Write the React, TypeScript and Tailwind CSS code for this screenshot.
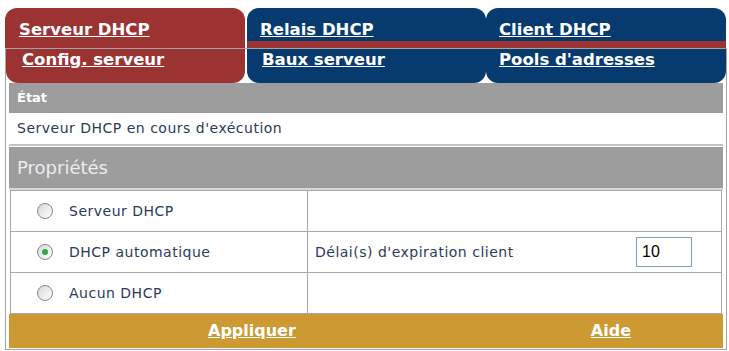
import React from "react";

const font = { fontFamily: '"DejaVu Sans", Verdana, sans-serif' };

function Radio({ checked }: { checked?: boolean }) {
  return (
    <span className="flex h-[16px] w-[16px] items-center justify-center rounded-full border border-[#7b8898] bg-gradient-to-br from-[#d8d8d8] to-white">
      {checked && <span className="h-[6px] w-[6px] rounded-full bg-[#2fa84a]" />}
    </span>
  );
}

function OptionRow({ label, checked, right }: { label: string; checked?: boolean; right?: React.ReactNode }) {
  return (
    <div className="flex h-[41px] border-b border-[#a8a8a8] last:h-[40px] last:border-b-0">
      <div className="flex w-[297px] items-center gap-[16px] border-r border-[#a8a8a8] pl-[26px] text-[14px] tracking-[0.5px] text-[#2b3a5c]">
        <Radio checked={checked} />
        <span>{label}</span>
      </div>
      <div className="flex flex-1 items-center">{right}</div>
    </div>
  );
}

export default function App() {
  return (
    <div className="h-[351px] w-[729px] overflow-hidden bg-white pl-[5px] pt-[8px]" style={font}>
      {/* top tabs */}
      <div className="flex h-[40px] text-[16.5px] font-bold leading-none text-white">
        <div className="w-[240px] rounded-t-[12px] bg-[#9b3333] pl-[14px] pt-[14px]">
          <a className="underline">Serveur DHCP</a>
        </div>
        <div className="ml-[2px] w-[239px] rounded-t-[12px] border-b-[7px] border-[#9b3333] bg-[#073a6e] pl-[13px] pt-[14px]">
          <a className="underline">Relais DHCP</a>
        </div>
        <div className="w-[240px] rounded-t-[12px] border-b-[7px] border-[#9b3333] bg-[#073a6e] pl-[13px] pt-[14px]">
          <a className="underline">Client DHCP</a>
        </div>
      </div>

      <div className="w-[722px] border border-[#a3a3a3]">
        {/* sub tabs */}
        <div className="flex h-[34px] text-[16.5px] font-bold leading-none text-white">
          <div className="w-[239px] rounded-b-[12px] bg-[#9b3333] pl-[16px] pt-[3px]">
            <a className="underline">Config. serveur</a>
          </div>
          <div className="ml-[2px] w-[239px] rounded-b-[12px] bg-[#073a6e] pl-[15px] pt-[3px]">
            <a className="underline">Baux serveur</a>
          </div>
          <div className="w-[240px] rounded-b-[12px] bg-[#073a6e] pl-[13px] pt-[3px]">
            <a className="underline">Pools d'adresses</a>
          </div>
        </div>

        <div className="px-[3px] pb-[1px]">
          <div className="flex h-[30px] items-center bg-[#9d9d9d] pl-[8px] text-[13px] font-bold text-white">État</div>
          <div className="flex h-[33px] items-center border-b-2 border-[#c4c4c4] bg-white pl-[8px] text-[14px] tracking-[0.5px] text-[#2b3a5c]">
            Serveur DHCP en cours d'exécution
          </div>
          <div className="mt-[1px] flex h-[43px] items-center border-b-2 border-[#d8d8d8] bg-[#9d9d9d] pl-[8px] text-[18px] text-[#ececec]">
            Propriétés
          </div>

          <div className="mx-[1px] border border-[#a8a8a8]">
            <OptionRow label="Serveur DHCP" />
            <OptionRow
              label="DHCP automatique"
              checked
              right={
                <div className="flex w-full items-center justify-between pl-[7px] pr-[29px] text-[14px] tracking-[0.5px] text-[#2b3a5c]">
                  <span>Délai(s) d'expiration client</span>
                  <span
                    className="flex h-[30px] w-[56px] items-center border border-[#7f9db9] bg-white pl-[5px] text-[16px] tracking-normal text-black"
                    style={{ fontFamily: '"Liberation Sans", Arial, sans-serif' }}
                  >
                    10
                  </span>
                </div>
              }
            />
            <OptionRow label="Aucun DHCP" />
          </div>

          <div className="flex h-[34px] items-center bg-[#cc9933] text-[16px] font-bold text-white">
            <a className="ml-[199px] underline">Appliquer</a>
            <a className="ml-[295px] underline">Aide</a>
          </div>
        </div>
      </div>
    </div>
  );
}
